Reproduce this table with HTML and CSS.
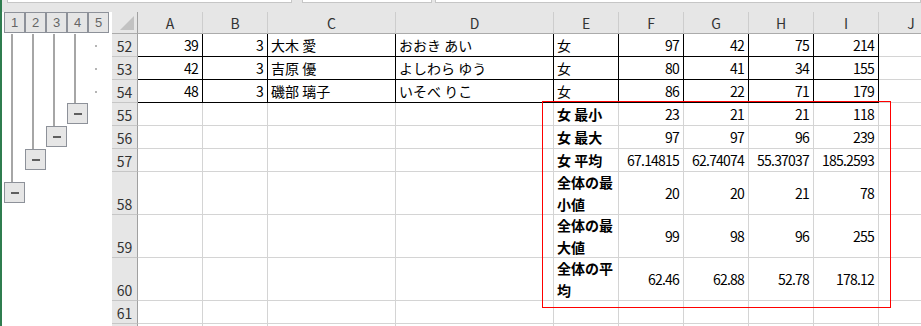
FILE: index.html
```html
<!DOCTYPE html>
<html lang="ja">
<head>
  <meta charset="UTF-8" />
  <title>成績集計</title>
  <link rel="stylesheet" href="styles.css">
</head>
<body>
  <div class="app">
    <!-- 上のバー -->
    <div class="topbar">
      <div class="field name-box"></div>
      <div class="field fx-box"></div>
      <div class="field formula"></div>
    </div>

    <div class="workspace">
      <!-- アウトライン(グループ化) -->
      <div class="outline">
        <div class="level-btn">1</div>
        <div class="level-btn">2</div>
        <div class="level-btn">3</div>
        <div class="level-btn">4</div>
        <div class="level-btn">5</div>

        <div class="tree lv1"><div class="stem"></div><div class="fold tall"></div></div>
        <div class="tree lv2"><div class="stem"></div><div class="fold"></div></div>
        <div class="tree lv3"><div class="stem"></div><div class="fold"></div></div>
        <div class="tree lv4"><div class="stem"></div><div class="fold"></div></div>

        <div class="dot r1"></div>
        <div class="dot r2"></div>
        <div class="dot r3"></div>
      </div>

      <!-- シート -->
      <div class="sheet" id="sheet">
        <div class="mark"></div>
      </div>
    </div>
  </div>

  <script>
    const cols = ['A', 'B', 'C', 'D', 'E', 'F', 'G', 'H', 'I', 'J'];
    const rows = [
      { n: 52, boxed: true, cells: [39, 3, '大木 愛', 'おおき あい', '女', 97, 42, 75, 214] },
      { n: 53, boxed: true, cells: [42, 3, '吉原 優', 'よしわら ゆう', '女', 80, 41, 34, 155] },
      { n: 54, boxed: true, cells: [48, 3, '磯部 璃子', 'いそべ りこ', '女', 86, 22, 71, 179] },
      { n: 55, cells: ['', '', '', '', '女 最小', 23, 21, 21, 118] },
      { n: 56, cells: ['', '', '', '', '女 最大', 97, 97, 96, 239] },
      { n: 57, cells: ['', '', '', '', '女 平均', '67.14815', '62.74074', '55.37037', '185.2593'] },
      { n: 58, cells: ['', '', '', '', '全体の最小値', 20, 20, 21, 78] },
      { n: 59, cells: ['', '', '', '', '全体の最大値', 99, 98, 96, 255] },
      { n: 60, cells: ['', '', '', '', '全体の平均', '62.46', '62.88', '52.78', '178.12'] },
      { n: 61, cells: [] },
      { n: '', cells: [] }  // 画面下端で切れる行
    ];

    function cell(cls, text) {
      const div = document.createElement('div');
      div.className = cls;
      if (text !== undefined) div.textContent = text;
      return div;
    }

    function renderSheet() {
      const sheet = document.getElementById('sheet');
      const mark = sheet.querySelector('.mark');

      // 列見出し
      const corner = cell('corner');
      corner.appendChild(cell('corner-tri'));
      sheet.insertBefore(corner, mark);
      cols.forEach(c => sheet.insertBefore(cell('colhdr', c), mark));

      // 行
      rows.forEach(row => {
        sheet.insertBefore(cell('rowhdr', row.n), mark);
        cols.forEach((c, i) => {
          const v = row.cells[i] ?? '';
          let cls = 'c';
          if (typeof v === 'number' || /^[\d.]+$/.test(v)) cls += ' num';
          if (i === 4 && row.n >= 55) cls += ' label';
          if (row.boxed && i < 9) cls += ' boxed';
          sheet.insertBefore(cell(cls, v), mark);
        });
      });
    }

    renderSheet();
  </script>
</body>
</html>
```

FILE: styles.css
```css
* {
  box-sizing: border-box;
}

body {
  margin: 0;
  font-family: "Noto Sans CJK JP", sans-serif;
  font-size: 14px;
  color: #000;
  background: #fff;
  overflow: hidden;
}

.app {
  height: 326px;
  border-left: 2px solid #2f7d4f;
  overflow: hidden;
}

/* 上のバー */
.topbar {
  height: 12px;
  background: #e6e6e6;
  display: flex;
  padding-left: 5px;
}

.field {
  height: 3px;
  background: #fff;
  border: 1px solid #c6c6c6;
  border-top: none;
}

.name-box {
  width: 285px;
  margin-right: 10px;
}

.fx-box {
  width: 130px;
  margin-right: 3px;
}

.formula {
  flex: 1;
}

.workspace {
  display: flex;
}

/* アウトライン */
.outline {
  flex: none;
  width: 110px;
  padding-left: 2px;
  display: grid;
  grid-template-columns: repeat(5, 21px);
  grid-template-rows: 22px 23px 23px 23px 23px 23px 23px 43px 43px 43px 23px 23px;
}

.level-btn {
  height: 21px;
  background: #e5e5e5;
  border: 1px solid #8d9199;
  color: #666;
  font-family: "Liberation Sans", sans-serif;
  font-size: 13px;
  display: flex;
  align-items: center;
  justify-content: center;
}

.tree {
  display: flex;
  flex-direction: column;
  align-items: flex-start;
}

.tree .stem {
  flex: 1;
  width: 2px;
  margin-left: 7px;
  background: #a6a6a6;
}

.fold {
  flex: none;
  width: 21px;
  height: 21px;
  margin-bottom: 2px;
  background: #e6e6e6;
  border: 1px solid #8d9199;
  display: flex;
  align-items: center;
  justify-content: center;
}

.fold::before {
  content: "";
  width: 8px;
  height: 2px;
  background: #5f5f5f;
}

.fold.tall {
  margin-bottom: 12px;
}

.lv1 { grid-column: 1; grid-row: 2 / 9; }
.lv2 { grid-column: 2; grid-row: 2 / 8; }
.lv3 { grid-column: 3; grid-row: 2 / 7; }
.lv4 { grid-column: 4; grid-row: 2 / 6; }

.dot {
  grid-column: 5;
  display: flex;
  align-items: center;
}

.dot::before {
  content: "";
  width: 2px;
  height: 2px;
  margin-left: 7px;
  background: #b5b5b5;
}

.dot.r1 { grid-row: 2; }
.dot.r2 { grid-row: 3; }
.dot.r3 { grid-row: 4; }

/* シート */
.sheet {
  position: relative;
  flex: none;
  display: grid;
  grid-template-columns: 26px 65px 65px 128px 158px repeat(6, 65px);
  grid-template-rows: 22px 23px 23px 23px 23px 23px 23px 43px 43px 43px 23px 23px;
}

.corner {
  background: #e6e6e6;
  border-right: 1px solid #a0a0a0;
  border-bottom: 1px solid #ababab;
  display: flex;
  align-items: flex-end;
  justify-content: flex-end;
  padding: 0 3px 3px 0;
}

.corner-tri {
  width: 0;
  height: 0;
  border-left: 14px solid transparent;
  border-bottom: 14px solid #c2c2c2;
}

.colhdr {
  background: #e6e6e6;
  border-right: 1px solid #cdcdcd;
  border-bottom: 1px solid #ababab;
  color: #333;
  display: flex;
  align-items: center;
  justify-content: center;
}

.rowhdr {
  background: #e6e6e6;
  border-right: 1px solid #a0a0a0;
  border-bottom: 1px solid #c6c6c6;
  color: #333;
  line-height: 20px;
  display: flex;
  align-items: flex-end;
  justify-content: center;
}

.c {
  border-right: 1px solid #d4d4d4;
  border-bottom: 1px solid #d4d4d4;
  padding: 0 3px;
  display: flex;
  align-items: center;
  white-space: nowrap;
  overflow: hidden;
}

.c.num {
  justify-content: flex-end;
  letter-spacing: -0.8px;
  padding-right: 4px;
}

.c.boxed {
  border-color: #000;
}

.c.label {
  font-weight: bold;
  white-space: normal;
  line-height: 22px;
}

/* 集計範囲の赤枠 */
.mark {
  position: absolute;
  left: 430px;
  top: 89px;
  width: 349px;
  height: 207px;
  border: 1px solid #f00;
}
```
